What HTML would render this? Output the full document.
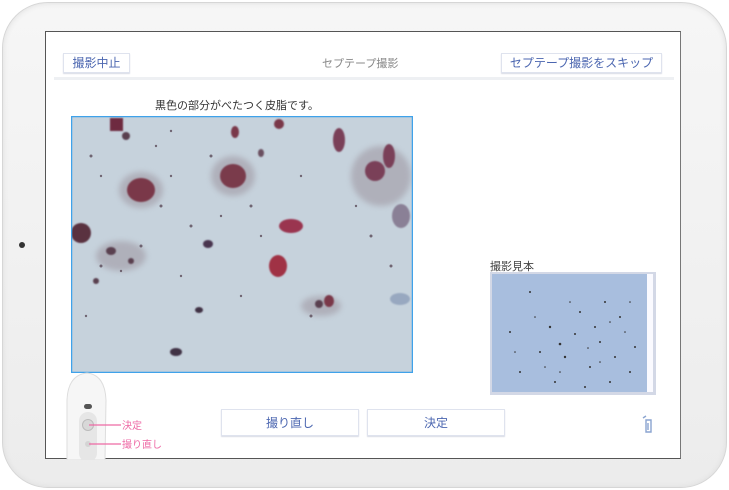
<!DOCTYPE html>
<html><head><meta charset="utf-8"><style>
*{margin:0;padding:0;box-sizing:border-box}
body{width:729px;height:490px;background:#fff;position:relative;overflow:hidden;font-family:"Liberation Sans","Noto Sans CJK JP",sans-serif}
.tab{position:absolute;left:2px;top:2px;width:725px;height:486px;border-radius:46px;background:linear-gradient(#f6f6f6,#ececec);border:1px solid #d6d6d6;box-shadow:inset 0 0 6px #ddd}
.scr{position:absolute;left:45px;top:31px;width:636px;height:428px;background:#fff;border:1px solid #555;border-right-color:#777}
.btn{position:absolute;background:#fff;border:1px solid #dfe3ee;box-shadow:0 1px 1px #d8dbe6;color:#4b66b0;font-size:12px;text-align:center}
.t{position:absolute;font-size:11px;color:#333}
</style></head><body>
<div class="tab"></div>
<div style="position:absolute;left:19px;top:242px;width:6px;height:6px;border-radius:50%;background:#333"></div>
<div class="scr">
 <div class="btn" style="left:17px;top:21px;width:67px;height:20px;line-height:18px">撮影中止</div>
 <div class="t" style="left:276px;top:23px;color:#888;font-size:11px">セプテープ撮影</div>
 <div class="btn" style="left:455px;top:21px;width:161px;height:20px;line-height:18px">セプテープ撮影をスキップ</div>
 <div style="position:absolute;left:8px;top:45px;width:620px;height:3px;background:#eef0f3"></div>
 <div class="t" style="left:109px;top:65px">黒色の部分がべたつく皮脂です。</div>
 <svg style="position:absolute;left:25px;top:84px" width="342" height="257" viewBox="0 0 342 257">
  <defs><filter id="b"><feGaussianBlur stdDeviation="0.9"/></filter><filter id="c"><feGaussianBlur stdDeviation="3"/></filter></defs>
  <rect x="0" y="0" width="342" height="257" fill="#c6d2dc"/>
  <g filter="url(#c)" fill="#a09aa4" opacity="0.6">
   <ellipse cx="162" cy="60" rx="22" ry="20"/><ellipse cx="70" cy="74" rx="22" ry="18"/><ellipse cx="310" cy="60" rx="30" ry="30"/><ellipse cx="50" cy="140" rx="25" ry="15"/><ellipse cx="250" cy="190" rx="20" ry="10"/>
  </g>
  <g filter="url(#b)" fill="#7a3848">
   <rect x="39" y="2" width="13" height="13" fill="#6e2c40"/>
   <ellipse cx="70" cy="74" rx="14" ry="12"/>
   <ellipse cx="162" cy="60" rx="13" ry="12" fill="#7a3a4c"/>
   <ellipse cx="220" cy="110" rx="12" ry="7" fill="#9a3450"/>
   <ellipse cx="207" cy="150" rx="9" ry="11" fill="#a03044"/>
   <ellipse cx="10" cy="117" rx="10" ry="10" fill="#5a3040"/>
   <ellipse cx="164" cy="16" rx="4" ry="6"/>
   <ellipse cx="208" cy="8" rx="5" ry="5"/>
   <ellipse cx="268" cy="24" rx="6" ry="12" fill="#7a4058"/>
   <ellipse cx="304" cy="55" rx="10" ry="10" fill="#7a4058"/>
   <ellipse cx="318" cy="40" rx="6" ry="12" fill="#7a4058"/>
   <ellipse cx="330" cy="100" rx="9" ry="12" fill="#8a8096"/>
   <ellipse cx="329" cy="183" rx="10" ry="6" fill="#98a8c0"/>
   <ellipse cx="105" cy="236" rx="6" ry="4" fill="#403044"/>
   <ellipse cx="258" cy="185" rx="5" ry="6"/>
   <ellipse cx="248" cy="188" rx="4" ry="4" fill="#5a4050"/>
   <ellipse cx="137" cy="128" rx="5" ry="4" fill="#4a3650"/>
   <ellipse cx="40" cy="135" rx="5" ry="4" fill="#5a4050"/>
   <ellipse cx="60" cy="145" rx="3" ry="3" fill="#5a4050"/>
   <ellipse cx="190" cy="37" rx="3" ry="4" fill="#6a5060"/>
   <ellipse cx="128" cy="194" rx="4" ry="3" fill="#403044"/>
   <ellipse cx="55" cy="20" rx="4" ry="4" fill="#5a4050"/>
   <ellipse cx="25" cy="165" rx="3" ry="3" fill="#5a4050"/>
  </g>
  <g fill="#5a4a58" opacity="0.8">
   <circle cx="20" cy="40" r="1.5"/><circle cx="30" cy="60" r="1.2"/><circle cx="90" cy="90" r="1.5"/><circle cx="100" cy="60" r="1.2"/><circle cx="120" cy="110" r="1.5"/><circle cx="150" cy="100" r="1.2"/><circle cx="180" cy="90" r="1.5"/><circle cx="190" cy="120" r="1.2"/><circle cx="70" cy="130" r="1.5"/><circle cx="50" cy="155" r="1.2"/><circle cx="30" cy="150" r="1.5"/><circle cx="110" cy="160" r="1.2"/><circle cx="240" cy="200" r="1.5"/><circle cx="285" cy="90" r="1.2"/><circle cx="300" cy="120" r="1.5"/><circle cx="230" cy="60" r="1.2"/><circle cx="140" cy="40" r="1.5"/><circle cx="100" cy="15" r="1.2"/><circle cx="15" cy="200" r="1.2"/><circle cx="320" cy="150" r="1.5"/><circle cx="85" cy="30" r="1.2"/><circle cx="170" cy="180" r="1.2"/></g>
  <rect x="0.5" y="0.5" width="341" height="256" fill="none" stroke="#3fa2ea" stroke-width="1.5"/>
 </svg>
 <div class="t" style="left:444px;top:226px;color:#444">撮影見本</div>
 <svg style="position:absolute;left:444px;top:240px" width="166" height="123">
  <rect width="166" height="123" fill="#d3d8e6"/>
  <rect x="2" y="2" width="155" height="118" fill="#a8bede"/>
  <rect x="157" y="2" width="6" height="118" fill="#fafaff"/>
  <g fill="#333">
   <circle cx="40" cy="20" r="1"/><circle cx="90" cy="40" r="1"/><circle cx="60" cy="55" r="1.2"/><circle cx="110" cy="70" r="1"/><circle cx="130" cy="45" r="1"/><circle cx="75" cy="85" r="1.2"/><circle cx="100" cy="95" r="1"/><circle cx="30" cy="100" r="1"/><circle cx="140" cy="100" r="1"/><circle cx="120" cy="110" r="1"/><circle cx="50" cy="80" r="1"/><circle cx="85" cy="62" r="1"/><circle cx="115" cy="30" r="1"/><circle cx="145" cy="75" r="1"/><circle cx="65" cy="110" r="1"/><circle cx="95" cy="115" r="1"/><circle cx="20" cy="60" r="1"/><circle cx="105" cy="55" r="1"/><circle cx="125" cy="85" r="1"/><circle cx="70" cy="72" r="1.3"/>
   <circle cx="45" cy="45" r="0.8"/><circle cx="80" cy="30" r="0.8"/><circle cx="135" cy="60" r="0.8"/><circle cx="55" cy="95" r="0.8"/><circle cx="110" cy="90" r="0.8"/><circle cx="25" cy="80" r="0.8"/><circle cx="140" cy="30" r="0.8"/><circle cx="98" cy="76" r="0.8"/><circle cx="120" cy="50" r="0.8"/><circle cx="70" cy="100" r="0.8"/></g>
 </svg>
 <div class="btn" style="left:175px;top:377px;width:138px;height:27px;line-height:26px">撮り直し</div>
 <div class="btn" style="left:321px;top:377px;width:138px;height:27px;line-height:26px">決定</div>
 <svg style="position:absolute;left:594px;top:383px" width="14" height="18"><path d="M3 3 L6 1 M6 5 H11 V17 H6 Z M8 8 V15" stroke="#8aa4d0" stroke-width="1.4" fill="none"/></svg>
 <svg style="position:absolute;left:20px;top:340px" width="110" height="88">
  <path d="M1 88 L1 28 Q2 3 21 1 Q39 3 40 28 L39 88 Z" fill="#f6f6f6" stroke="#ddd"/>
  <rect x="18" y="32" width="8" height="5" rx="2.5" fill="#555"/>
  <rect x="13" y="40" width="18" height="50" rx="9" fill="#e6e6e6"/>
  <circle cx="22" cy="53" r="5.5" fill="#d8d8d8" stroke="#bbb"/>
  <circle cx="22" cy="72" r="3" fill="#d4d4d4"/>
  <path d="M23 53 H55 M23 72 H55" stroke="#ee6aa5" stroke-width="1.2"/>
  <text x="56" y="57" font-size="10" fill="#ee6aa5" font-family="Liberation Sans,Noto Sans CJK JP,sans-serif">決定</text>
  <text x="56" y="76" font-size="10" fill="#ee6aa5" font-family="Liberation Sans,Noto Sans CJK JP,sans-serif">撮り直し</text>
 </svg>
</div>
</body></html>
